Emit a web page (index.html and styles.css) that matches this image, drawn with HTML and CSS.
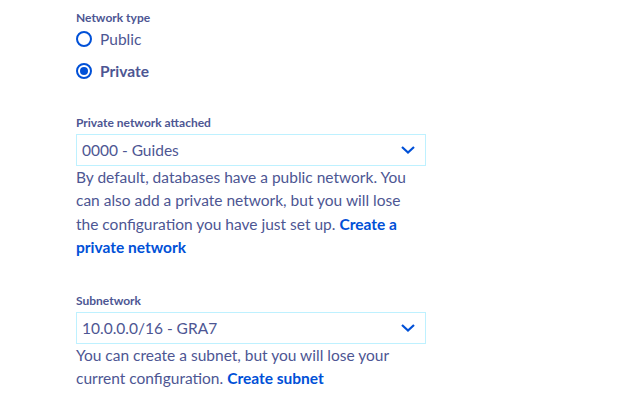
FILE: index.html
```html
<!DOCTYPE html>
<html lang="en">
<head>
<meta charset="utf-8">
<link rel="stylesheet" href="styles.css">
</head>
<body>
<div class="form">
  <fieldset class="group">
    <div class="label">Network type</div>
    <label class="radio">
      <span class="dot"></span>
      <span class="radio-text">Public</span>
    </label>
    <label class="radio checked">
      <span class="dot"></span>
      <span class="radio-text">Private</span>
    </label>
  </fieldset>

  <div class="field first">
    <div class="label">Private network attached</div>
    <div class="select">
      <span>0000 - Guides</span>
      <svg class="chev" width="14" height="8" viewBox="0 0 14 8"><path d="M1 1 L7 6.5 L13 1" fill="none" stroke="#0050d7" stroke-width="2.2"/></svg>
    </div>
    <p class="help">By default, databases have a public network. You can also add a private network, but you will lose the configuration you have just set up. <a href="#">Create a private network</a></p>
  </div>

  <div class="field second">
    <div class="label">Subnetwork</div>
    <div class="select">
      <span>10.0.0.0/16 - GRA7</span>
      <svg class="chev" width="14" height="8" viewBox="0 0 14 8"><path d="M1 1 L7 6.5 L13 1" fill="none" stroke="#0050d7" stroke-width="2.2"/></svg>
    </div>
    <p class="help">You can create a subnet, but you will lose your current configuration. <a href="#">Create subnet</a></p>
  </div>
</div>
</body>
</html>
```

FILE: styles.css
```css
html, body {
  margin: 0;
  padding: 0;
  background: #ffffff;
}
body {
  font-family: "Lato", "Liberation Sans", sans-serif;
  color: #4d5693;
  width: 642px;
  height: 413px;
  overflow: hidden;
}
.form {
  padding: 10px 0 0 76px;
  width: 350px;
}
.group {
  border: 0;
  margin: 0;
  padding: 0;
}
.label {
  font-size: 12px;
  line-height: 16px;
  font-weight: 700;
}
.radio {
  display: flex;
  align-items: center;
  gap: 8px;
  height: 32px;
}
.radio:first-of-type {
  margin-top: -3px;
}
.dot {
  box-sizing: border-box;
  width: 16px;
  height: 16px;
  border: 2px solid #0050d7;
  border-radius: 50%;
  display: flex;
  align-items: center;
  justify-content: center;
}
.checked .dot::after {
  content: "";
  width: 8px;
  height: 8px;
  border-radius: 50%;
  background: #0050d7;
}
.radio-text {
  font-size: 15.5px;
}
.checked .radio-text {
  font-weight: 700;
}
.field.first {
  margin-top: 28px;
}
.field.second {
  margin-top: 33.5px;
}
.select {
  box-sizing: border-box;
  height: 32px;
  border: 1px solid #bef1ff;
  display: flex;
  align-items: center;
  justify-content: space-between;
  padding: 0 10px 0 5px;
  font-size: 15.5px;
  margin-top: 3px;
}
.chev {
  display: block;
}
.help {
  margin: 0;
  max-width: 338px;
  font-size: 15.5px;
  line-height: 23.33px;
}
.help a {
  color: #0050d7;
  font-weight: 700;
  text-decoration: none;
}
```
